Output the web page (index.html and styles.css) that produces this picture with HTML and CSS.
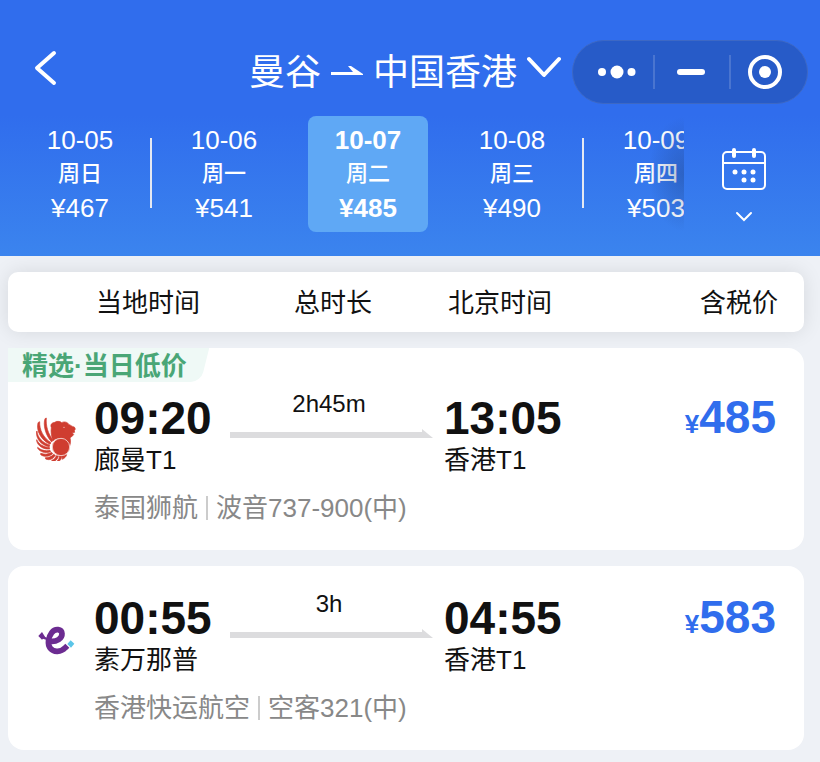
FILE: index.html
```html
<!DOCTYPE html>
<html lang="zh-CN">
<head>
    <meta charset="UTF-8">
    <meta name="viewport" content="width=device-width, initial-scale=1.0">
    <title>曼谷 - 中国香港</title>
    <link rel="stylesheet" href="styles.css">
</head>
<body>
    <header class="header">
        <div class="topbar">
            <button class="back" aria-label="返回">
                <svg width="24" height="36" viewBox="0 0 24 36"><path d="M21 3L4 18l17 15"/></svg>
            </button>
            <button class="route">
                <span>曼谷</span>
                <svg class="route-arrow" width="32" height="14" viewBox="0 0 32 14"><path d="M0 6h22L17 0h3l12 8v1H0z"/></svg>
                <span>中国香港</span>
                <svg class="route-more" width="34" height="34" viewBox="0 0 34 34"><path d="M2 3l15 16L32 3"/></svg>
            </button>
            <div class="capsule">
                <button aria-label="更多">
                    <svg width="40" height="14" viewBox="0 0 40 14"><circle cx="5" cy="7" r="4"/><circle cx="20" cy="7" r="6.5"/><circle cx="34.5" cy="7" r="4"/></svg>
                </button>
                <button aria-label="最小化">
                    <svg width="28" height="6" viewBox="0 0 28 6"><rect width="28" height="6" rx="3"/></svg>
                </button>
                <button aria-label="关闭">
                    <svg width="34" height="34" viewBox="0 0 34 34"><circle class="ring" cx="17" cy="17" r="15"/><circle cx="17" cy="17" r="6"/></svg>
                </button>
            </div>
        </div>

        <div class="dates">
            <div class="date-list">
                <button class="date"><span>10-05</span><span class="week">周日</span><span>¥467</span></button>
                <i class="sep line"></i>
                <button class="date"><span>10-06</span><span class="week">周一</span><span>¥541</span></button>
                <i class="sep"></i>
                <button class="date active"><span>10-07</span><span class="week">周二</span><span>¥485</span></button>
                <i class="sep"></i>
                <button class="date"><span>10-08</span><span class="week">周三</span><span>¥490</span></button>
                <i class="sep line"></i>
                <button class="date"><span>10-09</span><span class="week">周四</span><span>¥503</span></button>
            </div>
            <button class="calendar" aria-label="选择日期">
                <svg width="46" height="44" viewBox="0 0 46 44">
                    <rect x="2" y="5" width="42" height="37" rx="4"/>
                    <path d="M2 16h42"/>
                    <path class="pin" d="M13 3v6M33 3v6"/>
                    <g class="dots"><circle cx="14" cy="25" r="2.5"/><circle cx="23" cy="25" r="2.5"/><circle cx="32" cy="25" r="2.5"/><circle cx="23" cy="33" r="2.5"/><circle cx="32" cy="33" r="2.5"/></g>
                </svg>
                <svg width="18" height="12" viewBox="0 0 18 12"><path d="M2 2l7 7 7-7"/></svg>
            </button>
        </div>
    </header>

    <main class="main">
        <div class="grid titles">
            <span class="t-dep">当地时间</span>
            <span class="t-dur">总时长</span>
            <span class="t-arr">北京时间</span>
            <span class="t-price">含税价</span>
        </div>

        <article class="grid card featured">
            <span class="tag">精选·当日低价</span>
            <!-- 狮航 -->
            <svg class="logo" viewBox="33 37 120 132" fill="#cf3d30" stroke="#cf3d30" stroke-width="2">
                <path d="M79 69c-4-10 2-15 11-16 4-5 16-3 20 1 8-5 19-1 22 6 6 1 9 6 16 7l3 6-3 5 1 5-7 1 4 6-7 7-4 2c3 10 2 21-4 30l-6 8c3-12 2-25-7-32-11-8-24-6-34 3-5-13-7-27-5-39z"/>
                <path d="M64 40c-2 24 5 47 20 66l-4 6C60 91 54 58 60 42z"/>
                <path d="M44 51c-1 25 11 48 34 63l-3 5C47 105 33 78 39 54z"/>
                <path d="M36 79c2 20 16 35 38 42l-1 5C48 122 34 103 34 82z"/>
                <path d="M35 105c7 14 20 22 38 23l1 5c-19 2-35-9-39-24z"/>
                <path d="M38 128c9 8 22 12 37 9l2 4c-16 6-32 1-39-10z"/>
                <path d="M47 146c12 4 22 3 33-3l3 4c-11 9-25 11-36 3z"/>
                <path d="M61 159c11 0 18-3 25-10l5 3c-6 11-17 16-29 11z"/>
                <path d="M80 167c7-2 11-7 14-14l6 1c-2 10-8 16-17 16z"/>
                <path d="M97 168c4-3 6-8 6-14h7c0 8-4 14-9 16z"/>
                <path d="M111 154l14-4c-2 7-7 11-13 14z"/>
                <circle cx="108" cy="127" r="26" stroke="#f3c8c3" stroke-width="3"/>
                <circle cx="117" cy="68" r="2" fill="#f3c8c3" stroke="none"/>
            </svg>
            <div class="dep">
                <div class="time">09:20</div>
                <div class="city">廊曼T1</div>
            </div>
            <div class="dur">
                <div class="len">2h45m</div>
                <div class="way"><svg width="12" height="9" viewBox="0 0 12 9"><path d="M0 0l11 9H0z"/></svg></div>
            </div>
            <div class="arr">
                <div class="time">13:05</div>
                <div class="city">香港T1</div>
            </div>
            <div class="price"><small>¥</small>485</div>
            <div class="plane"><span>泰国狮航</span><span>波音737-900(中)</span></div>
        </article>

        <article class="grid card">
            <!-- 香港快运 -->
            <svg class="logo" viewBox="33 21 120 132" fill="none" stroke="#6c2c91" stroke-width="17">
                <path d="M76 94c18 2 36-8 35-23-1-14-20-17-31-3-10 13-14 35-4 47 10 13 32 12 45-2l6-6"/>
                <path d="M46 73l10 10 10 4" stroke-width="7"/>
                <path d="M40 78l11-12 9 14-9 9z" fill="#6c2c91" stroke="none"/>
                <path d="M127 102l10-11 11 10-10 12z" fill="#5bc5e8" stroke="none"/>
            </svg>
            <div class="dep">
                <div class="time">00:55</div>
                <div class="city">素万那普</div>
            </div>
            <div class="dur">
                <div class="len">3h</div>
                <div class="way"><svg width="12" height="9" viewBox="0 0 12 9"><path d="M0 0l11 9H0z"/></svg></div>
            </div>
            <div class="arr">
                <div class="time">04:55</div>
                <div class="city">香港T1</div>
            </div>
            <div class="price"><small>¥</small>583</div>
            <div class="plane"><span>香港快运航空</span><span>空客321(中)</span></div>
        </article>
    </main>
</body>
</html>
```
FILE: styles.css
```css
* {
    box-sizing: border-box;
}
body {
    margin: 0;
    font-family: "Liberation Sans", "Noto Sans CJK SC", sans-serif;
    font-size: 26px;
    color: #111;
    background-color: #eef1f6;
}
button {
    padding: 0;
    border: none;
    background: none;
    color: inherit;
    font: inherit;
    cursor: pointer;
}
svg {
    display: block;
    flex: none;
}

/* header */
.header {
    padding: 40px 0 24px;
    color: #fff;
    background: linear-gradient(#306ded 45%, #3b84ee);
}
.topbar {
    display: grid;
    grid-template-columns: 1fr auto 1fr;
    align-items: center;
    height: 64px;
    padding-right: 12px;
}
.back {
    justify-self: start;
    padding: 0 20px 8px 33px;
}
.back svg,
.route-more {
    fill: none;
    stroke: #fff;
    stroke-width: 4;
    stroke-linecap: round;
    stroke-linejoin: round;
}
.route {
    display: flex;
    align-items: center;
    gap: 10px;
    padding: 2px 0 0 2px;
    font-size: 36px;
    line-height: 62px;
    white-space: nowrap;
}
.route-arrow {
    fill: #fff;
}
.capsule {
    display: flex;
    justify-self: end;
    width: 236px;
    height: 64px;
    border: 1px solid #3d68c4;
    border-radius: 32px;
    background-color: #275bc8;
}
.capsule button {
    display: flex;
    flex: 0 0 80px;
    align-items: center;
    justify-content: center;
}
.capsule button:first-child {
    padding-left: 8px;
}
.capsule button:nth-child(2) {
    flex-basis: 76px;
}
.capsule button:last-child {
    padding-right: 8px;
}
.capsule button + button {
    background: linear-gradient(#4a75d0, #4a75d0) left center / 2px 34px no-repeat;
}
.capsule svg {
    fill: #fff;
}
.capsule .ring {
    fill: none;
    stroke: #fff;
    stroke-width: 4;
}

/* dates */
.dates {
    display: flex;
    margin-top: 12px;
    padding-right: 16px;
}
.date-list {
    position: relative;
    display: flex;
    flex: 1;
    min-width: 0;
    padding-left: 20px;
    overflow: hidden;
}
.date-list::after {
    content: "";
    position: absolute;
    top: 0;
    right: 0;
    bottom: 0;
    width: 36px;
    background: radial-gradient(ellipse at right, rgba(30, 60, 120, 0.35), rgba(30, 60, 120, 0) 70%);
}
.date {
    flex: none;
    width: 120px;
    padding: 7px 0;
    border-radius: 8px;
    line-height: 34px;
}
.date span {
    display: block;
}
.date .week {
    font-size: 22px;
    font-weight: 500;
}
.date.active {
    background-color: #5fa8f5;
    font-weight: bold;
}
.sep {
    flex: none;
    width: 24px;
}
.sep.line {
    background: linear-gradient(#e4e8f2, #e4e8f2) 10px 22px / 2px 70px no-repeat;
}
.calendar {
    display: flex;
    flex: none;
    flex-direction: column;
    align-items: center;
    justify-content: center;
    gap: 20px;
    width: 120px;
    padding-top: 22px;
}
.calendar svg {
    fill: none;
    stroke: #fff;
    stroke-width: 2;
    stroke-linecap: round;
}
.calendar .pin {
    stroke-width: 4;
}
.calendar .dots {
    fill: #fff;
    stroke: none;
}

/* list */
.main {
    display: grid;
    gap: 16px;
    padding: 16px 16px 12px 8px;
}
.grid {
    display: grid;
    grid-template-columns: 86px 136px 214fr 150px 184fr;
    padding-right: 26px;
    background-color: #fff;
}
.titles {
    padding-top: 2px;
    line-height: 58px;
    border-radius: 10px;
    box-shadow: 0 0 20px rgba(0, 0, 0, 0.1);
}
.t-dep {
    grid-column: 2;
    padding-left: 2px;
}
.t-dur {
    padding-right: 8px;
    text-align: center;
}
.t-arr {
    padding-left: 4px;
}
.t-price {
    text-align: right;
}
.card {
    position: relative;
    padding-top: 28px;
    padding-bottom: 24px;
    border-radius: 16px;
}
.card.featured {
    padding-top: 46px;
    border-top-left-radius: 0;
}
.tag {
    position: absolute;
    top: 0;
    left: 0;
    z-index: 0;
    padding: 2px 22px 0 14px;
    overflow: hidden;
    color: #4aa676;
    font-weight: bold;
    line-height: 32px;
}
.tag::before {
    content: "";
    position: absolute;
    z-index: -1;
    top: 0;
    right: 4px;
    bottom: 0;
    left: -10px;
    border-bottom-right-radius: 10px;
    background-color: #eff9f6;
    transform: skewX(-14deg);
}
.logo {
    width: 40px;
    height: 44px;
    margin: 23px 0 0 28px;
}
.time {
    font-size: 46px;
    font-weight: bold;
    line-height: 48px;
}
.city {
    line-height: 36px;
}
.dur {
    padding-right: 10px;
    font-size: 24px;
    line-height: 20px;
    text-align: center;
}
.len {
    padding-right: 6px;
}
.way {
    display: flex;
    justify-content: flex-end;
    margin-top: 15px;
    background: linear-gradient(#dcdcde, #dcdcde) left bottom / calc(100% - 12px) 6px no-repeat;
}
.way svg {
    fill: #dcdcde;
}
.price {
    padding-right: 2px;
    color: #306ded;
    font-size: 46px;
    font-weight: bold;
    line-height: 46px;
    text-align: right;
}
.price small {
    font-size: 26px;
}
.plane {
    display: flex;
    grid-column: 2 / -1;
    align-items: center;
    margin-top: 12px;
    color: #888;
    line-height: 36px;
}
.plane span + span {
    margin-left: 8px;
    padding-left: 10px;
    background: linear-gradient(#ccc, #ccc) left center / 2px 24px no-repeat;
}
```
